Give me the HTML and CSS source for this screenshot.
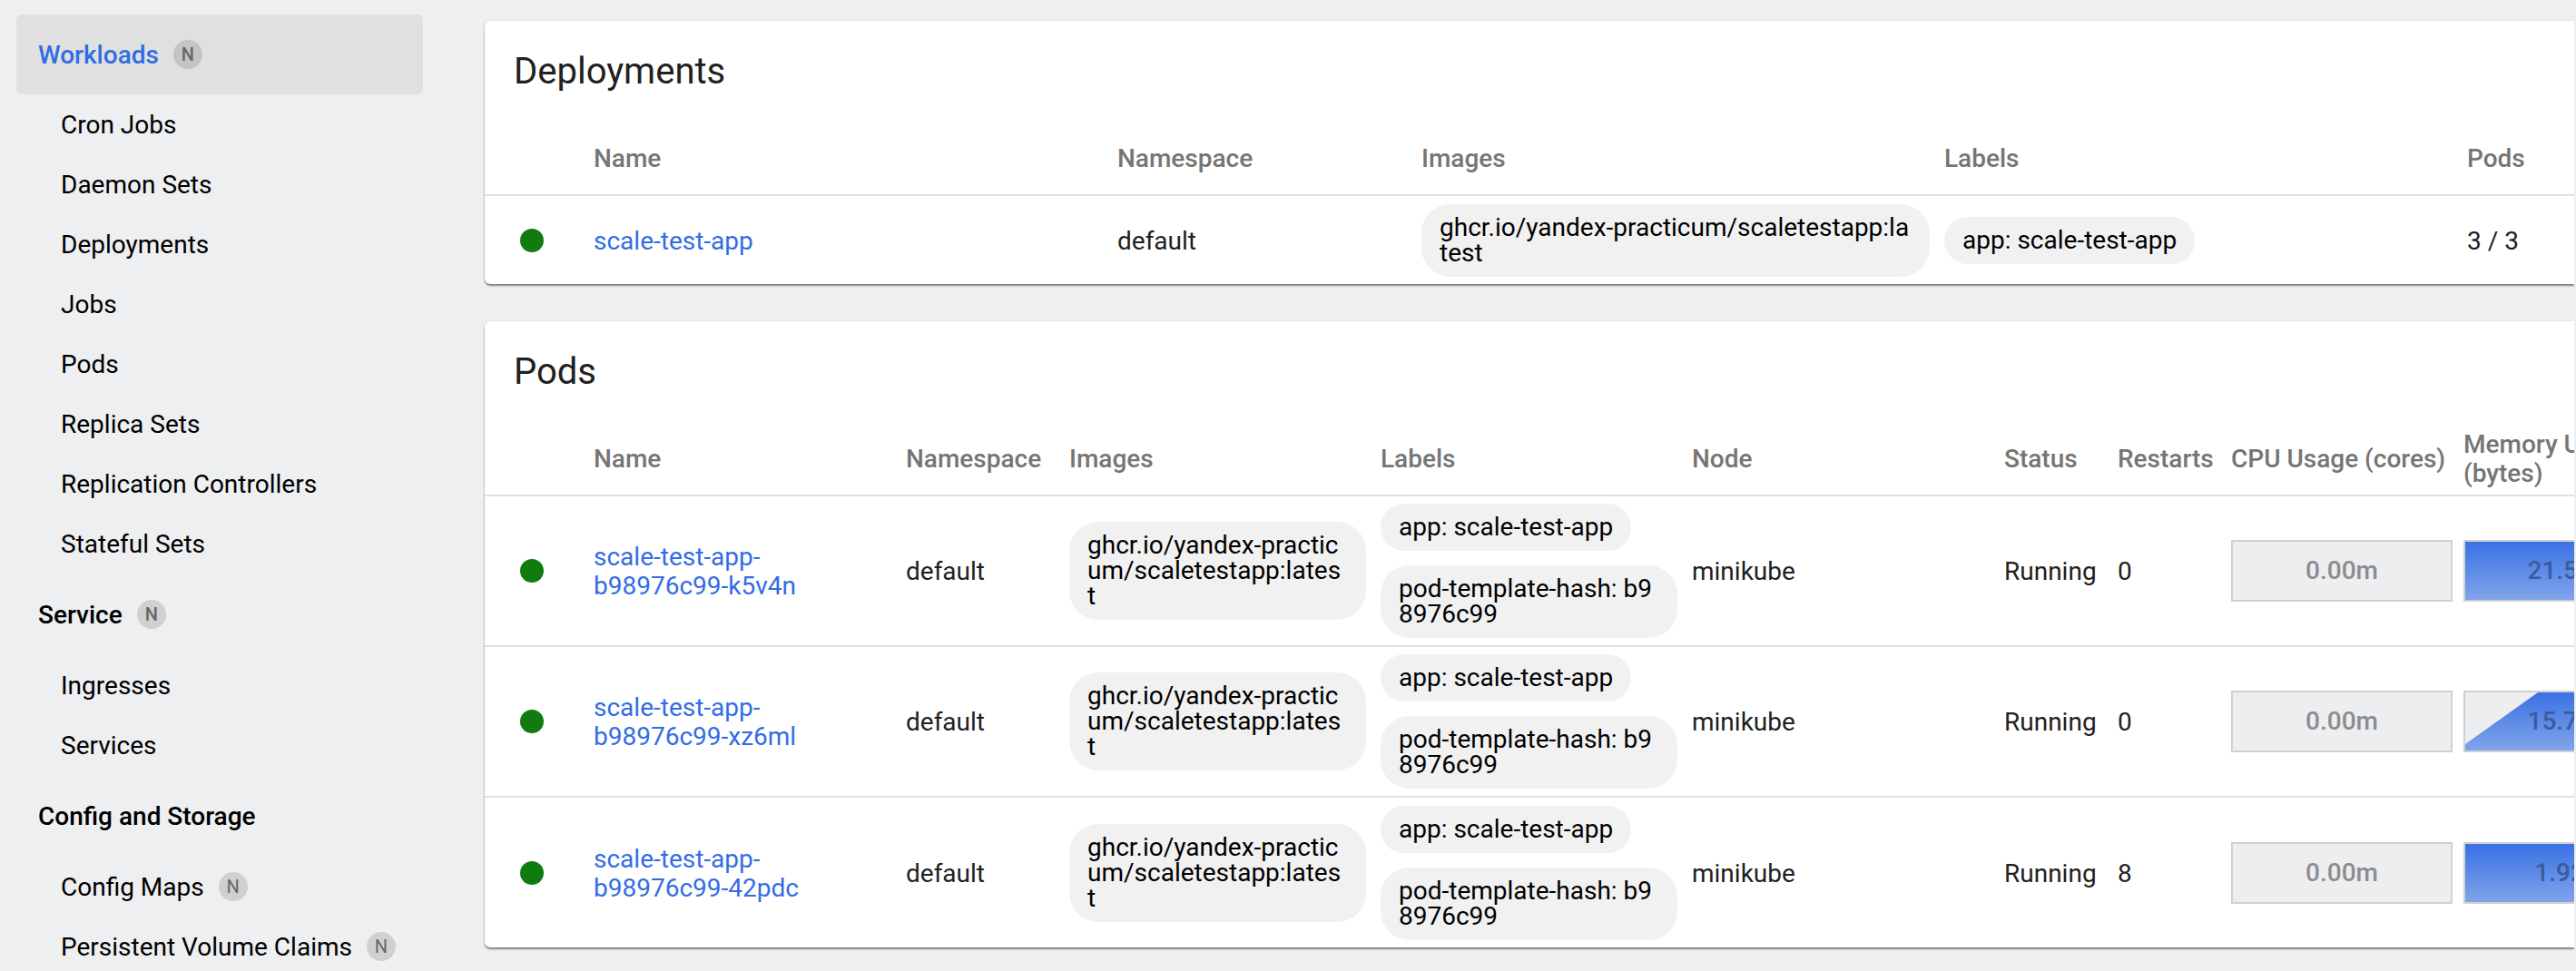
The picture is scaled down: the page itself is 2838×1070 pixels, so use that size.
FILE: index.html
```html
<!DOCTYPE html>
<html lang="en">
    <head>
        <meta charset="UTF-8" />
        <title>Workloads - Kubernetes Dashboard</title>
        <link rel="stylesheet" href="styles.css">
    </head>

    <body>
        <div class="layout">
            <nav class="sidebar">
                <div class="navTitle active"><span class="navLabel">Workloads</span><span class="badge">N</span></div>
                <div class="navItem">Cron Jobs</div>
                <div class="navItem">Daemon Sets</div>
                <div class="navItem">Deployments</div>
                <div class="navItem">Jobs</div>
                <div class="navItem">Pods</div>
                <div class="navItem">Replica Sets</div>
                <div class="navItem">Replication Controllers</div>
                <div class="navItem">Stateful Sets</div>
                <div class="navTitle"><span class="navLabel">Service</span><span class="badge">N</span></div>
                <div class="navItem">Ingresses</div>
                <div class="navItem">Services</div>
                <div class="navTitle"><span class="navLabel">Config and Storage</span></div>
                <div class="navItem">Config Maps<span class="badge">N</span></div>
                <div class="navItem">Persistent Volume Claims<span class="badge">N</span></div>
            </nav>

            <main class="content">
                <section class="card">
                    <h2 class="cardTitle">Deployments</h2>
                    <table class="grid deployTable">
                        <thead>
                            <tr>
                                <th class="colStatus"></th>
                                <th class="colDeployName">Name</th>
                                <th class="colDeployNs">Namespace</th>
                                <th class="colDeployImages">Images</th>
                                <th class="colDeployLabels">Labels</th>
                                <th class="colDeployPods">Pods</th>
                            </tr>
                        </thead>
                        <tbody>
                            <tr>
                                <td><span class="dot"></span></td>
                                <td class="plain"><a class="link">scale-test-app</a></td>
                                <td class="plain">default</td>
                                <td><div class="chip">ghcr.io/yandex-practicum/scaletestapp:latest</div></td>
                                <td><div class="chip">app: scale-test-app</div></td>
                                <td class="plain">3 / 3</td>
                            </tr>
                        </tbody>
                    </table>
                </section>

                <section class="card">
                    <h2 class="cardTitle">Pods</h2>
                    <table class="grid podTable">
                        <thead>
                            <tr>
                                <th class="colStatus"></th>
                                <th class="colName">Name</th>
                                <th class="colNs">Namespace</th>
                                <th class="colImages">Images</th>
                                <th class="colLabels">Labels</th>
                                <th class="colNode">Node</th>
                                <th class="colPhase">Status</th>
                                <th class="colRestarts">Restarts</th>
                                <th class="colCpu">CPU Usage (cores)</th>
                                <th class="colMem">Memory Usage (bytes)</th>
                            </tr>
                        </thead>
                        <tbody>
                            <tr>
                                <td><span class="dot"></span></td>
                                <td class="plain"><a class="link">scale-test-app-b98976c99-k5v4n</a></td>
                                <td class="plain">default</td>
                                <td><div class="chip">ghcr.io/yandex-practicum/scaletestapp:latest</div></td>
                                <td>
                                    <div class="chip">app: scale-test-app</div>
                                    <div class="chip">pod-template-hash: b98976c99</div>
                                </td>
                                <td class="plain">minikube</td>
                                <td class="plain">Running</td>
                                <td class="plain">0</td>
                                <td><div class="spark">0.00m</div></td>
                                <td><div class="spark full">21.55Mi</div></td>
                            </tr>
                            <tr>
                                <td><span class="dot"></span></td>
                                <td class="plain"><a class="link">scale-test-app-b98976c99-xz6ml</a></td>
                                <td class="plain">default</td>
                                <td><div class="chip">ghcr.io/yandex-practicum/scaletestapp:latest</div></td>
                                <td>
                                    <div class="chip">app: scale-test-app</div>
                                    <div class="chip">pod-template-hash: b98976c99</div>
                                </td>
                                <td class="plain">minikube</td>
                                <td class="plain">Running</td>
                                <td class="plain">0</td>
                                <td><div class="spark">0.00m</div></td>
                                <td>
                                    <div class="spark">
                                        <svg class="sparkArea" viewBox="0 0 240 64" preserveAspectRatio="none">
                                            <defs>
                                                <linearGradient id="memFill" x1="0" y1="0" x2="0" y2="1">
                                                    <stop offset="0" stop-color="#3a72e4" />
                                                    <stop offset="1" stop-color="#80a4ea" />
                                                </linearGradient>
                                            </defs>
                                            <polygon points="0,57 80,0 240,0 240,64 0,64" fill="url(#memFill)" />
                                        </svg>
                                        <span class="sparkText onFill">15.73Mi</span>
                                    </div>
                                </td>
                            </tr>
                            <tr>
                                <td><span class="dot"></span></td>
                                <td class="plain"><a class="link">scale-test-app-b98976c99-42pdc</a></td>
                                <td class="plain">default</td>
                                <td><div class="chip">ghcr.io/yandex-practicum/scaletestapp:latest</div></td>
                                <td>
                                    <div class="chip">app: scale-test-app</div>
                                    <div class="chip">pod-template-hash: b98976c99</div>
                                </td>
                                <td class="plain">minikube</td>
                                <td class="plain">Running</td>
                                <td class="plain">8</td>
                                <td><div class="spark">0.00m</div></td>
                                <td><div class="spark full">1.92Mi</div></td>
                            </tr>
                        </tbody>
                    </table>
                </section>
            </main>
        </div>
    </body>
</html>
```

FILE: styles.css
```css
html,
body {
    margin: 0;
    height: 100%;
    overflow: hidden;
}

body {
    background: #eeeff1;
    color: #000;
    font-family: Roboto, "Liberation Sans", sans-serif;
    font-size: 28px;
}

.layout {
    display: flex;
    height: 1070px;
}

/* left navigation */
.sidebar {
    flex: none;
    width: 448px;
    padding: 16px 0 0 18px;
}

.navTitle {
    display: flex;
    align-items: center;
    height: 88px;
    margin: 1px 0;
    padding-left: 24px;
    font-weight: 500;
    border-radius: 6px;
}

.navTitle.active {
    margin: 0;
    background: #e0e0e0;
}

.navTitle.active .navLabel {
    color: #326ce5;
}

.navItem {
    display: flex;
    align-items: center;
    height: 66px;
    padding-left: 49px;
}

.badge {
    display: flex;
    align-items: center;
    justify-content: center;
    width: 32px;
    height: 32px;
    margin-left: 16px;
    border-radius: 50%;
    background: #d0d0d0;
    color: #666;
    font-size: 20px;
    font-weight: 400;
}

.navTitle .badge {
    font-weight: 500;
}

.navTitle.active .badge {
    background: #c4c4c4;
}

/* cards, the right side is cut 2px before the window edge */
.content {
    flex: none;
    box-sizing: border-box;
    width: 2306px;
    height: 1070px;
    margin-left: 64px;
    padding: 23px 0 0 4px;
    overflow: hidden;
}

.card {
    width: 100%;
    margin-bottom: 41px;
    background: #fff;
    border-radius: 6px 0 0 6px;
    overflow: hidden;
    box-shadow: 0 2px 2px rgba(0, 0, 0, 0.45), 0 0 2px rgba(0, 0, 0, 0.15);
}

.cardTitle {
    height: 112px;
    margin: 0;
    padding-left: 32px;
    font-size: 40px;
    font-weight: 400;
    line-height: 112px;
    color: #212121;
}

/* tables */
.grid {
    table-layout: fixed;
    border-collapse: collapse;
}

.deployTable {
    width: 2302px;
}

.podTable {
    width: 2436px;
}

.grid th {
    box-sizing: border-box;
    height: 80px;
    padding: 0;
    border-bottom: 2px solid #e0e0e0;
    color: #757575;
    font-weight: 500;
    line-height: 32px;
    text-align: left;
}

.grid td {
    box-sizing: border-box;
    padding: 0;
    border-bottom: 2px solid #e0e0e0;
    color: #212121;
    line-height: 32px;
    vertical-align: middle;
}

.grid td.plain {
    padding-top: 2px;
}

.grid tr:last-child td {
    border-bottom: 0;
}

.deployTable td {
    height: 98px;
}

.podTable td {
    height: 166px;
}

.colStatus { width: 120px; }
.colDeployName { width: 577px; }
.colDeployNs { width: 335px; }
.colDeployImages { width: 576px; }
.colDeployLabels { width: 576px; }
.colDeployPods { width: 118px; }
.colName { width: 344px; }
.colNs { width: 180px; }
.colImages { width: 343px; }
.colLabels { width: 343px; }
.colNode { width: 344px; }
.colPhase { width: 125px; }
.colRestarts { width: 125px; }
.colCpu { width: 256px; }
.colMem { width: 256px; }

.dot {
    display: block;
    width: 26px;
    height: 26px;
    margin-left: 39px;
    border-radius: 50%;
    background: #107c10;
}

.link {
    display: block;
    margin-right: 16px;
    color: #326ce5;
}

.chip {
    width: fit-content;
    margin: 8px 16px 8px 0;
    padding: 12px 20px;
    border-radius: 32px;
    background: #f1f1f2;
    color: #000;
    line-height: 28px;
    word-break: break-all;
}

.chip + .chip {
    margin-top: 16px;
}

/* usage sparklines */
.spark {
    position: relative;
    box-sizing: border-box;
    display: flex;
    align-items: center;
    justify-content: center;
    width: 244px;
    height: 68px;
    border: 2px solid #d0d0d0;
    background: #edeef0;
    color: #8b8d90;
    font-weight: 500;
}

.spark.full {
    background: linear-gradient(#3a72e4, #80a4ea);
    color: #3c5c9e;
}

.sparkArea {
    position: absolute;
    top: 0;
    left: 0;
    width: 100%;
    height: 100%;
}

.sparkText {
    position: relative;
}

.sparkText.onFill {
    color: #3c5c9e;
}
```
